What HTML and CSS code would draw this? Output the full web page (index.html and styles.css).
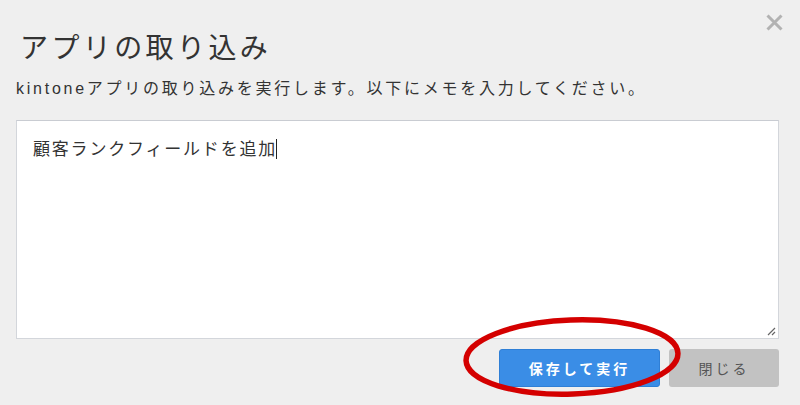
FILE: index.html
```html
<!DOCTYPE html>
<html>
<head>
  <meta charset="utf-8">
  <link rel="stylesheet" href="styles.css">
</head>
<body>
  <div id="dialog">
    <!-- Header: title and close -->
    <div class="header">
      <h1 class="title">アプリの取り込み</h1>
      <svg class="close" width="17" height="17" viewBox="0 0 17 17">
        <path d="M1.5 1.5 L15.5 15.5 M15.5 1.5 L1.5 15.5" stroke="#b2b2b2" stroke-width="3"/>
      </svg>
    </div>
    <p class="lead">kintoneアプリの取り込みを実行します。以下にメモを入力してください。</p>

    <!-- Memo box -->
    <div class="memo">
      <span class="memo-text">顧客ランクフィールドを追加</span><span class="caret"></span>
      <svg class="grip" width="10" height="10" viewBox="0 0 10 10">
        <path d="M9 2 L2 9 M9 6 L6 9" stroke="#666" stroke-width="1.2"/>
      </svg>
    </div>

    <!-- Buttons -->
    <div class="actions">
      <button class="btn primary">保存して実行</button>
      <button class="btn secondary">閉じる</button>
      <svg class="mark" width="230" height="90" viewBox="0 0 230 90">
        <ellipse cx="113" cy="44" rx="106" ry="37" fill="none" stroke="#d40000" stroke-width="5.5" transform="rotate(-2 113 44)"/>
      </svg>
    </div>
  </div>
</body>
</html>
```

FILE: styles.css
```css
/* Page */
body {
  margin: 0;
  background-color: #efefef;
  font-family: "Noto Sans CJK JP", "Liberation Sans", sans-serif;
  color: #333;
}

#dialog {
  width: 800px;
  height: 405px;
  box-sizing: border-box;
  padding: 0 21px 0 16px;
  display: flex;
  flex-direction: column;
  overflow: hidden;
}

/* Header */
.header {
  display: flex;
  justify-content: space-between;
  align-items: flex-start;
  height: 72px;
}

.title {
  margin: 26px 0 0 4px;
  font-size: 28px;
  font-weight: normal;
  letter-spacing: 3.4px;
  line-height: 40px;
  color: #333;
}

.close {
  margin-top: 14px;
  margin-right: -4px;
}

.lead {
  margin: 5px 0 0 0;
  font-family: "Liberation Sans", "Noto Sans CJK JP", sans-serif;
  font-size: 16px;
  letter-spacing: 2.75px;
  line-height: 24px;
  color: #333;
}

/* Memo */
.memo {
  position: relative;
  margin-top: 19px;
  height: 219px;
  box-sizing: border-box;
  background: #fff;
  border: 1px solid #d3d6db;
  border-top-color: #c9ccd2;
  padding: 14px 16px;
  font-size: 17px;
  letter-spacing: 1.8px;
  line-height: 26px;
  color: #333;
}

.caret {
  display: inline-block;
  width: 1px;
  height: 20px;
  background: #222;
  vertical-align: -4px;
  margin-left: -1px;
}

.grip {
  position: absolute;
  right: 2px;
  bottom: 2px;
}

/* Buttons */
.actions {
  position: relative;
  display: flex;
  justify-content: flex-end;
  gap: 9px;
  margin-top: 10px;
}

.btn {
  height: 38px;
  border: none;
  border-radius: 3px;
  font-family: "Noto Sans CJK JP", sans-serif;
  font-size: 14px;
  letter-spacing: 3px;
}

.primary {
  width: 161px;
  background-color: #3a8de6;
  color: #fff;
  font-weight: bold;
  border: 1px solid #2f7fd6;
}

.secondary {
  width: 110px;
  background-color: #c2c2c2;
  color: #555;
}

.mark {
  position: absolute;
  left: 443px;
  top: -36px;
  pointer-events: none;
}
```
